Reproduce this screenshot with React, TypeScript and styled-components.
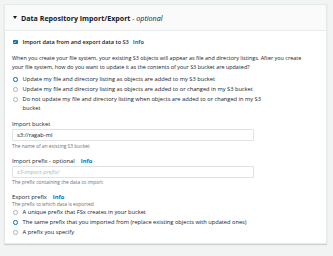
import React from "react";
import styled, { createGlobalStyle } from "styled-components";

const GlobalStyle = createGlobalStyle`
  html, body {
    margin: 0;
    padding: 0;
    background: #f2f3f3;
  }
  body {
    font-family: "Open Sans", "Liberation Sans", Arial, sans-serif;
    color: #16191f;
  }
`;

const Page = styled.div`
  padding: 4px 6px 8px 4px;
  width: 333px;
  box-sizing: border-box;
`;

const Card = styled.section`
  background: #ffffff;
  border: 1px solid #e6e9e9;
  box-shadow: 0 1px 1px rgba(0, 28, 36, 0.15);
`;

const Header = styled.div`
  height: 25px;
  display: flex;
  align-items: center;
  gap: 4px;
  padding-left: 8px;
  background: #fafafa;
  border-bottom: 1px solid #eaeded;
`;

const Caret = styled.span`
  width: 0;
  height: 0;
  border-left: 2px solid transparent;
  border-right: 2px solid transparent;
  border-top: 3px solid #16191f;
`;

const Title = styled.h2`
  margin: 0;
  font-size: 7.1px;
  font-weight: 700;
`;

const Optional = styled.span`
  font-weight: 400;
  font-style: italic;
`;

const Body = styled.div`
  padding: 7px 8px 5px 7px;
`;

const CheckRow = styled.label`
  display: flex;
  align-items: center;
  gap: 5px;
  height: 8px;
  padding-left: 1px;
  font-size: 5.6px;
  font-weight: 600;
`;

const Check = styled.span`
  width: 4.5px;
  height: 4.5px;
  border-radius: 1px;
  background: #0073bb;
  display: flex;
  align-items: center;
  justify-content: center;
`;

const Info = styled.span<{ $gap?: number }>`
  color: #0073bb;
  font-weight: 700;
  margin-left: ${(p) => p.$gap ?? 4}px;
`;

const Para = styled.p`
  margin: 7.5px 0 2px;
  max-width: 300px;
  font-size: 5.45px;
  line-height: 9.6px;
`;

const RadioList = styled.div`
  display: flex;
  flex-direction: column;
`;

const RadioRow = styled.label`
  display: flex;
  align-items: flex-start;
  gap: 5px;
  padding-left: 1px;
  font-size: 5.7px;
  line-height: 9.2px;
  min-height: 10px;
`;

const RadioDot = styled.span<{ $on?: boolean }>`
  flex: none;
  margin-top: 2.4px;
  width: 4.6px;
  height: 4.6px;
  border-radius: 50%;
  box-sizing: border-box;
  border: ${(p) => (p.$on ? "1.6px solid #0073bb" : "0.6px solid #aab7b8")};
  background: #ffffff;
`;

const RadioText = styled.span`
  max-width: 248px;
`;

const Field = styled.div`
  margin-top: 7px;
`;

const Label = styled.div`
  font-size: 5.8px;
  line-height: 8px;
  font-weight: 400;
`;

const Input = styled.div<{ $placeholder?: boolean }>`
  margin-top: 1px;
  width: 242px;
  height: 12px;
  box-sizing: border-box;
  border: 1px solid #dfe3e4;
  border-radius: 1px;
  display: flex;
  align-items: center;
  padding-left: 4px;
  font-size: 5.7px;
  color: ${(p) => (p.$placeholder ? "#aab7b8" : "#16191f")};
  font-style: ${(p) => (p.$placeholder ? "italic" : "normal")};
`;

const Help = styled.div<{ $tight?: boolean }>`
  margin-top: ${(p) => (p.$tight ? 0 : 1.5)}px;
  font-size: 4.9px;
  line-height: 7px;
  color: #687078;
`;

const updateOptions = [
  "Update my file and directory listing as objects are added to my S3 bucket",
  "Update my file and directory listing as objects are added to or changed in my S3 bucket",
  "Do not update my file and directory listing when objects are added to or changed in my S3 bucket",
];

const exportOptions = [
  "A unique prefix that FSx creates in your bucket",
  "The same prefix that you imported from (replace existing objects with updated ones)",
  "A prefix you specify",
];

function Radios({ options, selected }: { options: string[]; selected: number }) {
  return (
    <RadioList>
      {options.map((o, i) => (
        <RadioRow key={o}>
          <RadioDot $on={i === selected} />
          <RadioText>{o}</RadioText>
        </RadioRow>
      ))}
    </RadioList>
  );
}

export default function App() {
  return (
    <>
      <GlobalStyle />
      <Page>
        <Card>
          <Header>
            <Caret />
            <Title>
              Data Repository Import/Export <Optional>- optional</Optional>
            </Title>
          </Header>
          <Body>
            <CheckRow>
              <Check>
                <svg width="4" height="4" viewBox="0 0 10 10">
                  <path d="M2 5.2 L4.2 7.4 L8 2.8" fill="none" stroke="#fff" strokeWidth="1.8" />
                </svg>
              </Check>
              <span>
                Import data from and export data to S3<Info $gap={4}>Info</Info>
              </span>
            </CheckRow>
            <Para>
              When you create your file system, your existing S3 objects will appear as file and
              directory listings. After you create your file system, how do you want to update it
              as the contents of your S3 bucket are updated?
            </Para>
            <Radios options={updateOptions} selected={0} />

            <Field>
              <Label>Import bucket</Label>
              <Input>s3://ragab-ml</Input>
              <Help>The name of an existing S3 bucket</Help>
            </Field>

            <Field>
              <Label>
                Import prefix - optional<Info $gap={6}>Info</Info>
              </Label>
              <Input $placeholder>s3-import-prefix/</Input>
              <Help>The prefix containing the data to import</Help>
            </Field>

            <Field>
              <Label>
                Export prefix<Info $gap={6}>Info</Info>
              </Label>
              <Help $tight>The prefix to which data is exported</Help>
              <Radios options={exportOptions} selected={1} />
            </Field>
          </Body>
        </Card>
      </Page>
    </>
  );
}
